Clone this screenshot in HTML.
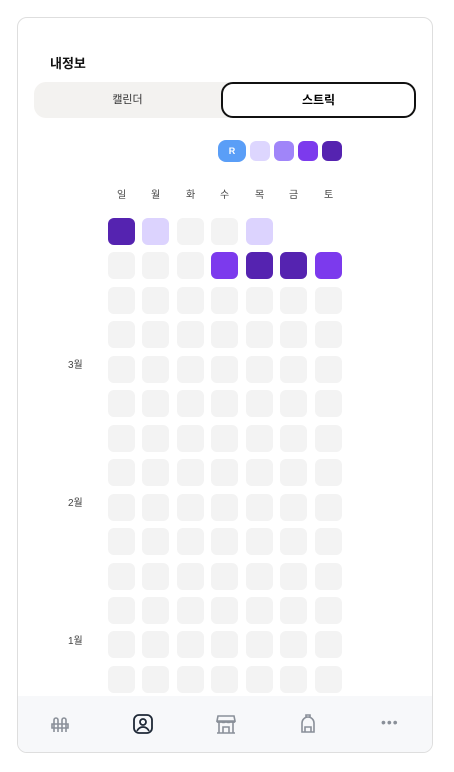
<!DOCTYPE html>
<html><head><meta charset="utf-8"><style>
*{box-sizing:border-box;margin:0;padding:0}
body{width:454px;height:772px;background:#fff;font-family:"Liberation Sans","Noto Sans CJK KR",sans-serif;position:relative;overflow:hidden}
.card{position:absolute;left:17px;top:17px;width:416px;height:736px;border:1px solid #dedede;border-radius:10px;overflow:hidden;background:#fff}
.t{position:absolute;font-size:13px;color:#111}
.tabs{position:absolute;left:16px;top:64px;width:382px;height:36px;background:#f3f2f0;border-radius:12px}
.act{position:absolute;left:187px;top:0;width:195px;height:36px;border:2px solid #111;border-radius:12px;background:#fff;text-align:center;line-height:32px;font-size:12px;font-weight:bold}
.c{position:absolute;width:27px;height:27px;border-radius:6px;background:#f3f3f3}
.d{position:absolute;font-size:10px;color:#444}
.nav{position:absolute;left:0;top:678px;width:416px;height:58px;background:#f7f8fa}
</style></head><body>
<div class="card">
<div class="t" style="left:32px;top:35px;font-weight:bold">내정보</div>
<div class="tabs"><div style="position:absolute;left:0;width:187px;text-align:center;line-height:36px;font-size:11px;color:#333">캘린더</div><div class="act">스트릭</div></div>
<div style="position:absolute;left:200px;top:122px;width:28px;height:22px;border-radius:8px;background:#5a9ef7;color:#fff;font-size:9px;font-weight:bold;text-align:center;line-height:22px">R</div>
<div style="position:absolute;left:232px;top:123px;width:20px;height:20px;border-radius:6px;background:#ddd6fe"></div>
<div style="position:absolute;left:256px;top:123px;width:20px;height:20px;border-radius:6px;background:#a085f9"></div>
<div style="position:absolute;left:280px;top:123px;width:20px;height:20px;border-radius:6px;background:#7c3aed"></div>
<div style="position:absolute;left:304px;top:123px;width:20px;height:20px;border-radius:6px;background:#5523b0"></div>
<div id="g"></div>
<div class="d" style="left:50px;top:338px">3월</div>
<div class="d" style="left:50px;top:476px">2월</div>
<div class="d" style="left:50px;top:614px">1월</div>
<div class="nav">
<svg style="position:absolute;left:32px;top:18px" width="20" height="20" viewBox="0 0 20 20" fill="none" stroke="#8a9099" stroke-width="1.6"><path d="M4 18V6a2 2 0 014 0v12M12 18V6a2 2 0 014 0v12M2 10h16v4H2z"/></svg>
<svg style="position:absolute;left:114px;top:17px" width="22" height="22" viewBox="0 0 22 22" fill="none" stroke="#1f2937" stroke-width="1.8"><rect x="2" y="2" width="18" height="18" rx="5"/><circle cx="11" cy="9" r="3"/><path d="M5 18c1.5-3 3.5-4 6-4s4.5 1 6 4"/></svg>
<svg style="position:absolute;left:197px;top:17px" width="22" height="22" viewBox="0 0 22 22" fill="none" stroke="#8a9099" stroke-width="1.6"><path d="M3 3h16l1 5H2zM2 8c0 2 4 2 4 0 0 2 5 2 5 0 0 2 5 2 5 0 0 2 4 2 4 0M4 10v10h14V10M8 20v-6h6v6M2 20h18"/></svg>
<svg style="position:absolute;left:280px;top:16px" width="20" height="22" viewBox="0 0 20 22" fill="none" stroke="#8a9099" stroke-width="1.6"><path d="M8 5V3h4v2M4 20V11a6 6 0 0112 0v9zM7 20v-5h6v5"/></svg>
<div style="position:absolute;left:363px;top:18px;font-size:14px;color:#8a9099;letter-spacing:1px">•••</div>
</div>
</div>
<script>
var g=document.getElementById('g'),xs=[90,124,159,193,228,262,297],days=['일','월','화','수','목','금','토'],h='';
days.forEach(function(d,i){h+='<div class="d" style="left:'+(xs[i]+9)+'px;top:168px">'+d+'</div>'});
var sp={'0,0':'#5523b0','0,1':'#dcd3fe','0,4':'#dcd3fe','0,5':'x','0,6':'x','1,3':'#7c3aed','1,4':'#5523b0','1,5':'#5523b0','1,6':'#7c3aed'};
for(var r=0;r<14;r++)for(var c=0;c<7;c++){var k=sp[r+','+c];if(k=='x')continue;var y=200+Math.round(r*34.45);h+='<div class="c" style="left:'+xs[c]+'px;top:'+y+'px'+(k?';background:'+k:'')+'"></div>'}
g.innerHTML=h;
</script>
</body></html>
